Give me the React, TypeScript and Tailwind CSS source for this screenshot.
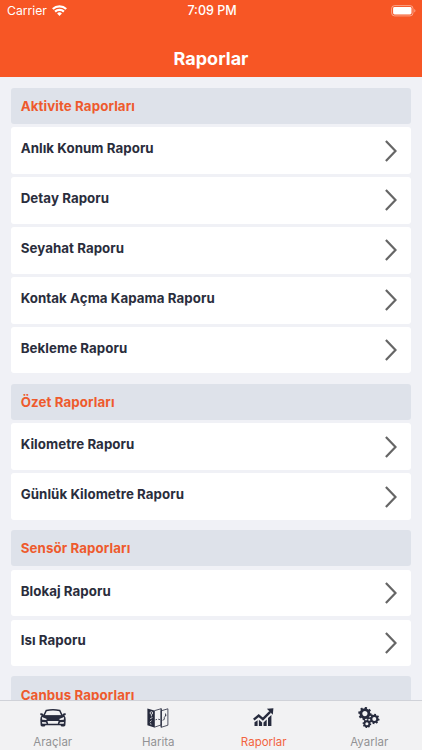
import React from 'react';

interface ReportSection {
  title: string;
  reports: string[];
}

const sections: ReportSection[] = [
  {
    title: 'Aktivite Raporları',
    reports: ['Anlık Konum Raporu', 'Detay Raporu', 'Seyahat Raporu', 'Kontak Açma Kapama Raporu', 'Bekleme Raporu'],
  },
  { title: 'Özet Raporları', reports: ['Kilometre Raporu', 'Günlük Kilometre Raporu'] },
  { title: 'Sensör Raporları', reports: ['Blokaj Raporu', 'Isı Raporu'] },
  { title: 'Canbus Raporları', reports: [] },
];

const WifiIcon = () => (
  <svg width="15" height="11" viewBox="0 0 15 11" fill="none" stroke="#fff" strokeWidth="2.2" className="-mt-[2px]">
    <path d="M0.8 4 A9.6 9.6 0 0 1 14.2 4" />
    <path d="M3.1 6.6 A6.3 6.3 0 0 1 11.9 6.6" />
    <path d="M7.5 11 L5.1 8.6 A3.3 3.3 0 0 1 9.9 8.6 Z" fill="#fff" stroke="none" />
  </svg>
);

const BatteryIcon = () => (
  <svg width="26" height="12" viewBox="0 0 26 12">
    <rect x="0.6" y="0.6" width="21.4" height="10.3" rx="3" fill="none" stroke="#fff" strokeOpacity="0.45" />
    <rect x="2.1" y="2.1" width="18.4" height="7.3" rx="1.4" fill="#fff" />
    <path d="M23.3 4 C24.8 4.4 24.8 7.1 23.3 7.5 Z" fill="#fff" fillOpacity="0.5" />
  </svg>
);

const ChevronIcon = () => (
  <svg width="12" height="22" viewBox="0 0 12 22" fill="none" stroke="#666" strokeWidth="2.2">
    <path d="M0.9 1 L10.5 11 L0.9 21" />
  </svg>
);

const CarIcon = () => (
  <svg width="26" height="18" viewBox="0 0 26 18" fill="#272b3d">
    <path d="M6.3 1.4 Q13 0.3 19.7 1.4 L22.3 7 H3.7 Z" fill="none" stroke="#272b3d" strokeWidth="1.5" />
    <path d="M0.1 4.6 Q1.8 3.7 3.3 5.1 L3.9 6.4 H22.1 L22.7 5.1 Q24.2 3.7 25.9 4.6 L25.6 6 L24.3 6.5 Q25.8 8.2 25.7 10.5 L25.4 16.3 Q25.2 17.4 24 17.4 H22 Q20.8 17.4 20.6 16.2 H5.4 Q5.2 17.4 4 17.4 H2 Q0.8 17.4 0.6 16.3 L0.3 10.5 Q0.2 8.2 1.7 6.5 L0.4 6 Z" />
    <path d="M1.9 7.9 L6.8 9.9 L6.2 11.1 L2.2 10.7 Z M24.1 7.9 L19.2 9.9 L19.8 11.1 L23.8 10.7 Z" fill="#f2f2f3" />
    <path d="M2 12.9 L5.9 13.3 L6.7 14.7 H2.3 Z M24 12.9 L20.1 13.3 L19.3 14.7 H23.7 Z M7.4 12 H18.6 L17.8 14.8 H8.2 Z" fill="#f2f2f3" />
  </svg>
);

const MapIcon = () => (
  <svg width="22" height="20" viewBox="0 0 22 20" fill="none" stroke="#272b3d">
    <path d="M0.4 0.5 L7.3 2.6 V19.4 L0.4 17.2 Z" fill="#272b3d" stroke="none" />
    <path d="M7.4 2.7 L14.2 0.7 L14.2 16.9 L7.4 19.2 Z" strokeWidth="0.8" />
    <path d="M14.2 2.8 L20.9 0.8 V17.2 L14.2 19.3 Z" strokeWidth="0.8" />
    <path d="M14.2 0.6 V19.3" strokeWidth="0.9" />
    <circle cx="4.4" cy="5" r="1.3" stroke="#f2f2f3" strokeWidth="0.8" />
    <path d="M4.4 6.5 V8.4 M3.2 10.6 L5.4 9.6 M2.8 14.2 L4.6 12.6 M3 15.7 L4.4 16.2" stroke="#f2f2f3" strokeWidth="0.8" />
    <path d="M8.5 11.8 L10 11.4 M11.2 11.2 L13 11.6 M15.5 12.3 L17.3 11.4 V9.3 M18.5 5.5 V8 M17.4 9.3 L19.4 6.8" strokeWidth="0.8" />
  </svg>
);

const ChartIcon = () => (
  <svg width="21" height="19" viewBox="0 0 21 19" fill="#272b3d">
    <path d="M1.5 14.3 L4.6 12.2 V18 H1.5 Z M5.9 11.7 L9.1 14.5 V18 H5.9 Z M10.5 14.4 L13.7 11.6 V18 H10.5 Z M15 10.1 L18.4 6.9 V18 H15 Z" />
    <path d="M0.8 11.7 L5.7 7.5 L9.9 11.1 L17.2 3.9" fill="none" stroke="#272b3d" strokeWidth="2.4" />
    <path d="M13.9 0.8 L20.4 0.2 L19.8 6.7 Z" />
  </svg>
);

interface GearProps {
  cx: number;
  cy: number;
  r: number;
  width: number;
}

// Ring body with eight short teeth around it
const Gear = ({ cx, cy, r, width }: GearProps) => (
  <g transform={`translate(${cx} ${cy})`}>
    <circle r={r} fill="none" stroke="#272b3d" strokeWidth={width} />
    {[0, 45, 90, 135, 180, 225, 270, 315].map((angle) => (
      <rect
        key={angle}
        x={-width * 0.42}
        y={-r - width * 0.95}
        width={width * 0.84}
        height={width}
        fill="#272b3d"
        transform={`rotate(${angle + 10})`}
      />
    ))}
  </g>
);

const GearsIcon = () => (
  <svg width="22" height="21" viewBox="0 0 22 21">
    <Gear cx={6.9} cy={6.6} r={4} width={2.8} />
    <Gear cx={16.3} cy={11.9} r={3.1} width={2.2} />
    <Gear cx={8.9} cy={16.7} r={2.5} width={1.9} />
  </svg>
);

const tabs = [
  { label: 'Araçlar', icon: <CarIcon />, active: false },
  { label: 'Harita', icon: <MapIcon />, active: false },
  { label: 'Raporlar', icon: <ChartIcon />, active: true },
  { label: 'Ayarlar', icon: <GearsIcon />, active: false },
];

export default function App() {
  return (
    <div className="w-[422px] h-[750px] flex flex-col overflow-hidden bg-[#f0f1f6] font-['Inter',sans-serif]">
      <header className="h-[77px] shrink-0 bg-[#f75625] text-white">
        <div className="h-[22px] grid grid-cols-3 items-center pl-[7px] pr-[5px]">
          <div className="flex items-center gap-[5px]">
            <span className="text-[12.2px] leading-[22px]">Carrier</span>
            <WifiIcon />
          </div>
          <span className="text-center text-[12.5px] leading-[22px] font-medium">7:09 PM</span>
          <div className="flex justify-end">
            <BatteryIcon />
          </div>
        </div>
        <h1 className="pt-[25px] text-center text-[18px] leading-6 font-bold">Raporlar</h1>
      </header>

      <main className="flex-1 min-h-0 overflow-hidden flex flex-col gap-[10.2px] pt-[10.6px] px-[10.7px]">
        {sections.map((section) => (
          <section key={section.title} className="shrink-0 flex flex-col gap-[3.3px]">
            <h2 className="h-[36.4px] pl-[10px] pt-[2px] flex items-center rounded-[3px] bg-[#dee2ea] text-[13.3px] font-bold tracking-[0.1px] text-[#ee5a2d]">
              {section.title}
            </h2>
            {section.reports.map((report) => (
              <div key={report} className="h-[46.6px] pl-[10px] pr-[14px] flex items-center justify-between rounded-[3px] bg-white">
                <span className="pb-[3px] text-[13.3px] font-bold tracking-[0.06px] text-[#2a2d3c]">{report}</span>
                <ChevronIcon />
              </div>
            ))}
          </section>
        ))}
      </main>

      <nav className="h-[50.5px] shrink-0 grid grid-cols-4 border-t border-[#d0d2d8] bg-[#f2f2f3]">
        {tabs.map((tab) => (
          <div key={tab.label} className="flex flex-col items-center">
            <div className="h-[34px] flex items-center justify-center">{tab.icon}</div>
            <span className={tab.active ? 'text-[11.5px] leading-[14px] text-[#f26440]' : 'text-[11.5px] leading-[14px] text-[#929295]'}>
              {tab.label}
            </span>
          </div>
        ))}
      </nav>
    </div>
  );
}
